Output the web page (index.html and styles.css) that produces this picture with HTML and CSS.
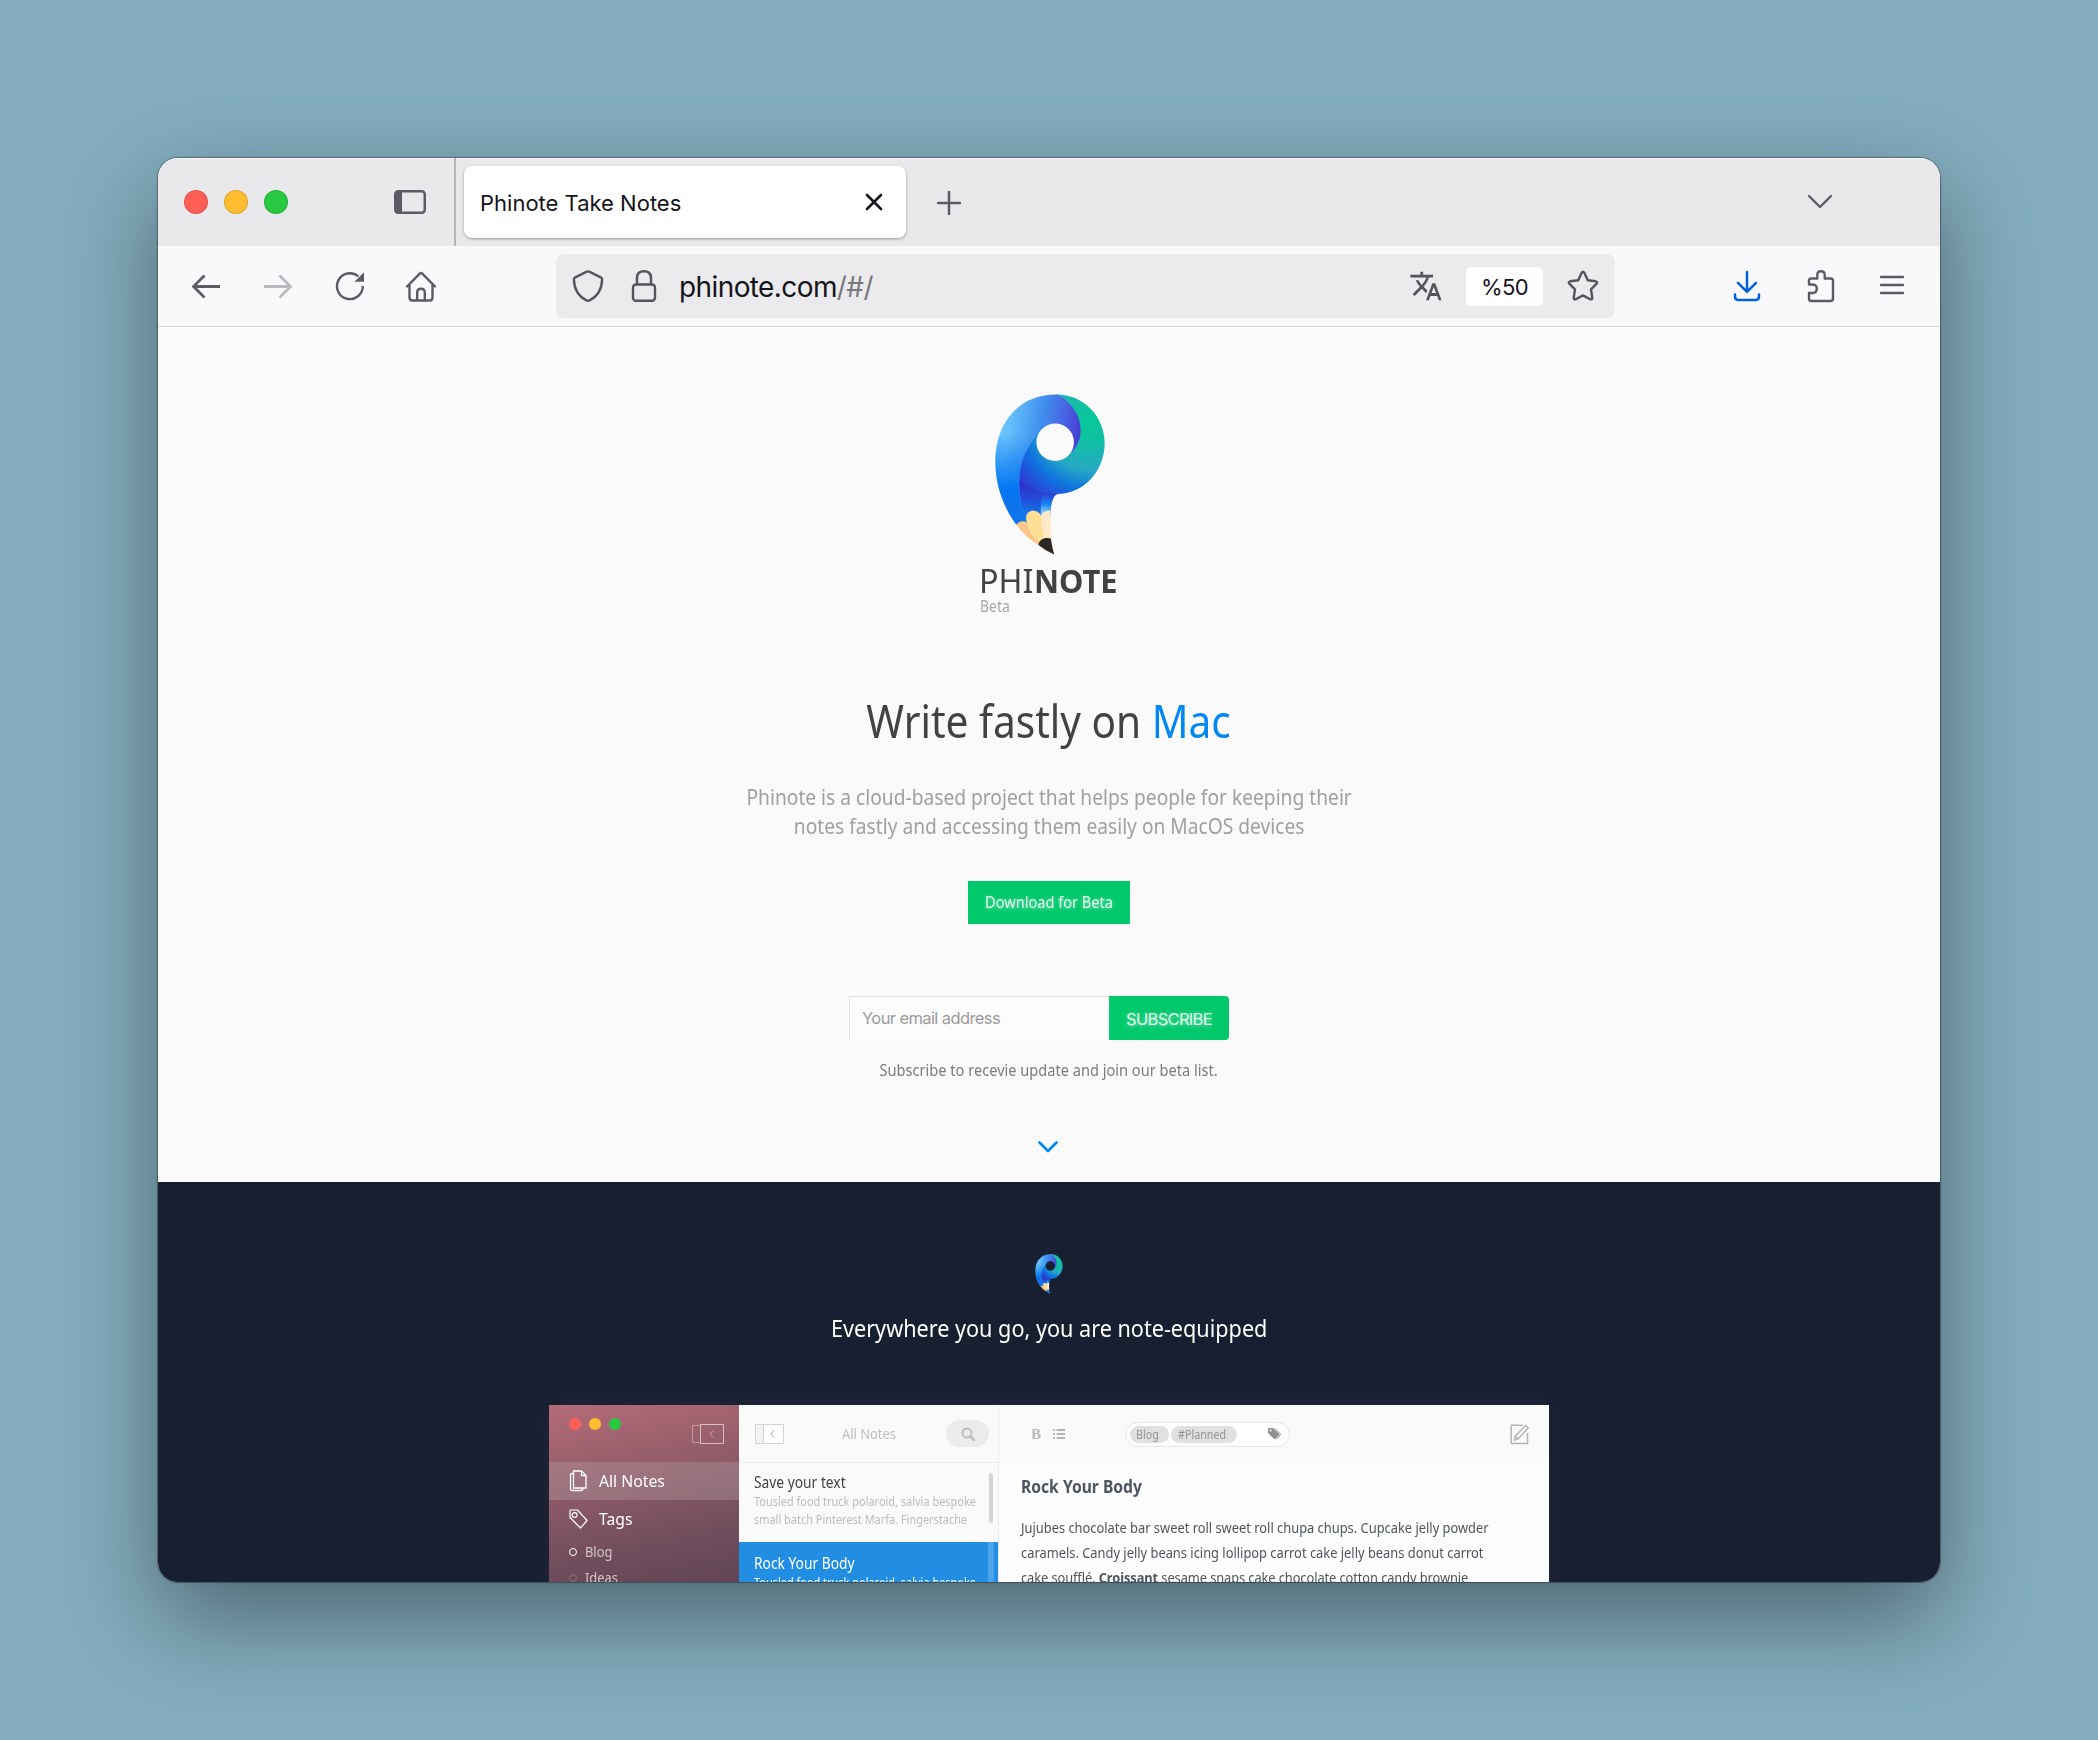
FILE: index.html
```html
<!DOCTYPE html>
<html lang="en">
<head>
<meta charset="utf-8">
<title>Phinote Take Notes</title>
<link rel="stylesheet" href="styles.css">
</head>
<body>
<svg class="sprite" aria-hidden="true">
  <defs>
    <radialGradient id="bowl" gradientUnits="userSpaceOnUse" cx="390" cy="155" r="275">
      <stop offset="0" stop-color="#06c997"/><stop offset=".2" stop-color="#10c0a2"/><stop offset=".52" stop-color="#27a9c4"/><stop offset=".72" stop-color="#0f78dc"/><stop offset=".88" stop-color="#2052dc"/><stop offset="1" stop-color="#2f3bd0"/>
    </radialGradient>
    <linearGradient id="arm" gradientUnits="userSpaceOnUse" x1="140" y1="160" x2="365" y2="190">
      <stop offset="0" stop-color="#68c3fb"/><stop offset=".45" stop-color="#3f8fee"/><stop offset=".75" stop-color="#4862e2"/><stop offset="1" stop-color="#4938d4"/>
    </linearGradient>
    <linearGradient id="armLow" gradientUnits="userSpaceOnUse" x1="170" y1="190" x2="150" y2="390">
      <stop offset="0" stop-color="#0275f2" stop-opacity="0"/><stop offset=".85" stop-color="#0275f2"/><stop offset="1" stop-color="#0d74ee"/>
    </linearGradient>
    <linearGradient id="stem" gradientUnits="userSpaceOnUse" x1="215" y1="345" x2="210" y2="440">
      <stop offset="0" stop-color="#3032cc"/><stop offset=".5" stop-color="#1f52dc"/><stop offset="1" stop-color="#1583ee"/>
    </linearGradient>
    <linearGradient id="facet" gradientUnits="userSpaceOnUse" x1="262" y1="368" x2="255" y2="422">
      <stop offset="0" stop-color="#2b3ed0"/><stop offset=".6" stop-color="#1684f2"/><stop offset="1" stop-color="#7cc4f8"/>
    </linearGradient>
    <mask id="hole" maskUnits="userSpaceOnUse" x="100" y="60" width="340" height="500">
      <path fill="#fff" d="M100 60h340v500H100z"/><circle cx="284" cy="215" r="56" fill="#000"/>
    </mask>
    <symbol id="logo" viewBox="104 71 329 481">
      <path fill="url(#stem)" d="M176 320C205 350 245 368 292 369C276 374 270 400 269 440L197 462C180 415 173 370 176 320Z"/>
      <path fill="url(#facet)" d="M246 363Q270 369 292 369C276 374 270 400 269 440L241 440Q240 400 246 363Z"/>
      <g mask="url(#hole)">
        <path fill="url(#bowl)" d="M288 72C370 72 432 138 432 218C432 302 368 370 290 370C243 370 206 351 176 325C172 290 190 180 240 150Z"/>
        <path fill="url(#arm)" d="M288 72C160 72 105 175 105 270C105 350 132 412 168 462Q180 448 197 454C168 370 172 300 193 252Q208 218 235 185L300 262Q315 262 328 250C372 215 380 125 292 72Z"/>
        <path fill="url(#armLow)" d="M288 72C160 72 105 175 105 270C105 350 132 412 168 462Q180 448 197 454C168 370 172 300 193 252Q208 218 235 185Z"/>
      </g>
      <path fill="#fcc68b" d="M168 462C176 449 193 449 201 457Q215 492 240 508L234 522Q195 500 168 462Z"/>
      <path fill="#ffe9c6" d="M240 440C244 424 256 418 270 420Q269 465 272 505L248 506Z"/>
      <path fill="#ffdf96" d="M197 445C196 424 210 419 220 420C233 421 242 430 243 442Q244 480 251 505L238 515Q205 490 197 445Z"/>
      <path fill="currentColor" d="M234 522C236 505 254 498 271 503Q274 526 281 551Q256 540 234 522Z"/>
    </symbol>
  </defs>
</svg>

<main class="window">
  <header class="tabbar">
    <div class="lights"><i class="red"></i><i class="yellow"></i><i class="green"></i></div>
    <svg class="sidebar-toggle" width="32" height="24" viewBox="0 0 32 24"><rect x="1.25" y="1.25" width="29.5" height="21.5" rx="3" fill="none" stroke="#5b5b66" stroke-width="2.5"/><path d="M2 2h6v20H2z" fill="#5b5b66"/></svg>
    <div class="tab"><span>Phinote Take Notes</span>
      <svg width="18" height="18" viewBox="0 0 18 18"><path d="M2 2l14 14M16 2L2 16" stroke="#15141a" stroke-width="2.6" stroke-linecap="round"/></svg></div>
    <svg class="plus" width="24" height="24" viewBox="0 0 24 24"><path d="M12 1v22M1 12h22" stroke="#5b5b66" stroke-width="2.5" stroke-linecap="round"/></svg>
    <svg class="tabs-menu" width="26" height="16" viewBox="0 0 26 16"><path d="M2 2l11 11L24 2" fill="none" stroke="#5b5b66" stroke-width="2.4" stroke-linecap="round" stroke-linejoin="round"/></svg>
  </header>

  <nav class="toolbar">
    <div class="nav-icons">
      <svg width="30" height="32" viewBox="0 0 30 32" fill="none" stroke="#5b5b66" stroke-width="2.8"><path d="M29 16.500H2.500M13.500 5.500l-11 11 11 11"/></svg>
      <svg width="30" height="32" viewBox="0 0 30 32" fill="none" stroke="#bababf" stroke-width="2.800"><path d="M1 16.500h26.500M16.500 5.500l11 11-11 11"/></svg>
      <svg width="30" height="32" viewBox="0 0 30 32"><path d="M27.800 16a12.900 12.900 0 1 1-4.500-9.600" fill="none" stroke="#5b5b66" stroke-width="2.400"/><path d="M29 2.200v9.600h-9.600z" fill="#5b5b66"/></svg>
      <svg width="32" height="32" viewBox="0 0 32 32" fill="none" stroke="#5b5b66" stroke-width="2.400" stroke-linecap="round" stroke-linejoin="round"><path d="M2 16.500L14.500 3.800q1.500-1.500 3 0L30 16.500M4.500 14.500v13q0 3 3 3h17q3 0 3-3v-13M12.200 30v-7.500q0-3.800 3.800-3.800t3.800 3.800V30"/></svg>
    </div>
    <div class="urlbar">
      <svg class="shield" width="32" height="32" viewBox="0 0 32 32" fill="none" stroke="#54545c" stroke-width="2.400" stroke-linejoin="round"><path d="M14.800 1.700q1.200-.7 2.400 0L28.700 7.300q1.500.8 1.400 2.400C29.800 19 25.500 26.300 17.500 30.400q-1.500.7-3 0C6.500 26.300 2.200 19 1.900 9.700Q1.800 8.100 3.300 7.300Z"/></svg>
      <svg class="lock" width="26" height="32" viewBox="0 0 26 32" fill="none" stroke="#54545c" stroke-width="2.400"><rect x="2" y="14.500" width="22" height="16.300" rx="3"/><path d="M6 14.500V8q0-6.800 7-6.800T20 8v6.500"/></svg>
      <span class="url">phinote.com<em>/#/</em></span>
      <svg class="translate" width="34" height="34" viewBox="0 0 24 24" fill="#54545c"><path d="M12.870 15.070l-2.540-2.510.03-.03c1.740-1.940 2.980-4.170 3.710-6.530H17V4h-7V2H8v2H1v1.990h11.170C11.500 7.920 10.440 9.750 9 11.350 8.070 10.320 7.300 9.190 6.690 8h-2c.73 1.630 1.730 3.170 2.980 4.560l-5.090 5.020L4 19l5-5 3.110 3.110.76-2.040zM18.500 10h-2L12 22h2l1.120-3h4.750L21 22h2l-4.500-12zm-2.620 7l1.620-4.330L19.120 17h-3.240z"/></svg>
      <span class="zoom">%50</span>
      <svg class="star" width="32" height="32" viewBox="0 0 32 32" fill="none" stroke="#54545c" stroke-width="2.400" stroke-linejoin="round"><path d="M14.700 2.800q1.300-2 2.600 0L20.800 10.200 28.800 11.300q2.200.6.9 2.400L24 19.400l1.300 8.300q0 2.300-2.200 1.500L16 25.400l-7.100 3.800q-2.200.8-2.200-1.500L8 19.400 2.300 13.700q-1.300-1.800.9-2.400l8-1.100Z"/></svg>
    </div>
    <div class="tools">
      <svg width="28" height="32" viewBox="0 0 28 32" fill="none" stroke="#0061e0" stroke-width="2.500" stroke-linecap="round" stroke-linejoin="round"><path d="M14 2v19.500M5 12.800l9 9 9-9M2 24.500v2q0 3.500 3.500 3.500h17q3.500 0 3.500-3.500v-2"/></svg>
      <svg width="28" height="34" viewBox="0 0 28 34" fill="none" stroke="#5b5b66" stroke-width="2.400" stroke-linejoin="round"><path d="M2 15.500v-3.700q0-2.300 2.300-2.300h6V6q0-3.800 3.700-3.800T17.700 6v3.500h5.800q2.500 0 2.500 2.500v17.500q0 2.500-2.500 2.500h-19Q2 32 2 29.500V24h3.500q4.300 0 4.300-4.200t-4.300-4.300Z"/></svg>
      <svg width="26" height="24" viewBox="0 0 26 24"><path d="M2 4h22M2 12h22M2 20h22" stroke="#5b5b66" stroke-width="2.400" stroke-linecap="round"/></svg>
    </div>
  </nav>

  <section class="hero">
    <svg class="logo" width="110" height="161"><use href="#logo"/></svg>
    <div class="brand">
      <div class="wordmark"><span>PHI</span><b>NOTE</b></div>
      <div class="beta">Beta</div>
    </div>
    <h1>Write fastly on <span>Mac</span></h1>
    <p class="lead">Phinote is a cloud-based project that helps people for keeping their<br>notes fastly and accessing them easily on MacOS devices</p>
    <a class="download"><span>Download for Beta</span></a>
    <form class="subscribe"><div class="email">Your email address</div><div class="submit">SUBSCRIBE</div></form>
    <p class="caption">Subscribe to recevie update and join our beta list.</p>
    <svg class="more" width="22" height="14" viewBox="0 0 22 14"><path d="M2.500 2.500l8.500 8.500 8.500-8.500" fill="none" stroke="#0388f1" stroke-width="2.800" stroke-linecap="round" stroke-linejoin="round"/></svg>
  </section>

  <section class="showcase">
    <svg class="logo-small" width="28" height="40"><use href="#logo"/></svg>
    <h2>Everywhere you go, you are note-equipped</h2>
    <div class="app">
      <aside class="side">
        <div class="side-head">
          <div class="dots"><i class="red"></i><i class="yellow"></i><i class="green"></i></div>
          <svg width="32" height="20" viewBox="0 0 32 20" fill="none" stroke="#fff"><path d="M8 1.500H.5v17H8" opacity=".35"/><path d="M8.500.5h23v19h-23z" opacity=".6"/><path d="M21 6.500l-3 3.500 3 3.500" opacity=".5"/></svg>
        </div>
        <div class="side-row active"><svg width="19" height="22" viewBox="0 0 19 22" fill="none" stroke="#fff" stroke-width="1.300"><path d="M4.500 1h8l4.500 4.500V18H4.500zM12.500 1v4.500H17M4.500 3.500H2.700Q1.500 3.500 1.500 5v14q0 1.500 1.500 1.500h9.500q1.500 0 1.500-2"/></svg><span>All Notes</span></div>
        <div class="side-row"><svg width="19" height="20" viewBox="0 0 19 20" fill="none" stroke="#fff" stroke-width="1.200" stroke-linejoin="round"><path d="M1 2q0-1 1-1h6.500L18 11.500 11.500 19 1 8.500z"/><circle cx="5.600" cy="6" r="2.400"/></svg><span>Tags</span></div>
        <div class="side-sub"><i></i><span>Blog</span></div>
        <div class="side-sub dim"><i></i><span>Ideas</span></div>
      </aside>
      <div class="list">
        <div class="list-head">
          <svg width="30" height="20" viewBox="0 0 30 20"><path d="M.5.500h8v19h-8z" fill="#f3f3f3" stroke="#d4d4d4"/><path d="M8.500.500h20v19h-20z" fill="#fff" stroke="#d4d4d4"/><path d="M19 6.500L16 10l3 3.500" fill="none" stroke="#aaa"/></svg>
          <span>All Notes</span>
          <div class="search"><svg width="14" height="14" viewBox="0 0 14 14" fill="none" stroke="#bcbcbc" stroke-width="2"><circle cx="6" cy="6" r="4.500"/><path d="M9.300 9.300l3.500 3.500" stroke-width="2.400" stroke-linecap="round"/></svg></div>
        </div>
        <div class="note">
          <h3>Save your text</h3>
          <p>Tousled food truck polaroid, salvia bespoke<br>small batch Pinterest Marfa. Fingerstache</p>
          <div class="thumb"></div>
        </div>
        <div class="note selected">
          <h3>Rock Your Body</h3>
          <p>Tousled food truck polaroid, salvia bespoke</p>
        </div>
      </div>
      <article class="editor">
        <div class="editor-head">
          <b class="bold">B</b>
          <svg width="12" height="10" viewBox="0 0 12 10" fill="#b4b4b4"><path d="M0 0h2v2H0zM0 4h2v2H0zM0 8h2v2H0zM3.500 0H12v2H3.500zM3.500 4H12v2H3.500zM3.500 8H12v2H3.500z"/></svg>
          <div class="tags"><span class="t1"><u>Blog</u></span><span class="t2"><u>#Planned</u></span>
            <svg width="13" height="12" viewBox="0 0 13 12"><path fill="#909090" d="M0 1.200Q0 0 1.200 0H5l6 5.800q.6.600 0 1.200L7.300 11q-.6.600-1.200 0L0 5z"/><circle cx="2.600" cy="2.600" r="1" fill="#fff"/><path d="M7 .4l5.200 5.400q.5.600 0 1.200L8.500 11.200" fill="none" stroke="#909090"/></svg></div>
          <svg class="compose" width="20" height="21" viewBox="0 0 20 21" fill="none" stroke="#b6b6b6" stroke-width="1.500"><path d="M13 1.200H1.200v18.300H17.500V9"/><path d="M15.500 1.500l2.700 2.700L8 15l-3.500 1 .7-3.800z"/><path d="M5.300 12.300l2.500 2.500"/></svg>
        </div>
        <h3>Rock Your Body</h3>
        <p>Jujubes chocolate bar sweet roll sweet roll chupa chups. Cupcake jelly powder<br>caramels. Candy jelly beans icing lollipop carrot cake jelly beans donut carrot<br><span class="tight">cake soufflé. <b>Croissant</b> sesame snaps cake chocolate cotton candy brownie</span></p>
      </article>
    </div>
  </section>
</main>
</body>
</html>
```
FILE: styles.css
```css
* { box-sizing: border-box; margin: 0; padding: 0; }
body { width: 2098px; height: 1740px; overflow: hidden; padding: 158px; background: #84adbe; font-family: "Noto Sans", sans-serif; }
svg { display: block; flex: none; }
i { display: block; border-radius: 50%; }
.sprite { position: absolute; width: 0; height: 0; }
.red { background: #ff5f57; }
.yellow { background: #febc2e; }
.green { background: #28c840; }

.window { width: 1782px; height: 1424px; border-radius: 20px; overflow: hidden; display: flex; flex-direction: column; background: #fafafa; box-shadow: 0 0 0 1px rgba(0,0,0,.25), 0 0 3px rgba(0,0,0,.2), 0 36px 96px rgba(0,0,0,.41); }

.tabbar { height: 88px; flex: none; display: flex; align-items: center; background: #e9e9eb; box-shadow: inset 0 1px 0 #f9f9fa; font-family: Inter, sans-serif; }
.lights { display: flex; gap: 16px; margin-left: 26px; }
.lights i { width: 24px; height: 24px; border: 1px solid rgba(0,0,0,.12); }
.sidebar-toggle { margin-left: 106px; }
.tab { width: 442px; height: 72px; margin-left: 38px; padding: 0 23px 0 16px; display: flex; align-items: center; justify-content: space-between; background: #fff; border-radius: 8px; box-shadow: 0 1px 3px rgba(0,0,0,.35); color: #15141a; font-size: 22px; line-height: 30px; position: relative; }
.tab::before { content: ""; position: absolute; left: -10px; top: -8px; width: 2px; height: 88px; background: #b5b5b8; }
.tab span { padding-top: 2px; }
.plus { margin-left: 31px; margin-top: 2px; }
.tabs-menu { margin-left: auto; margin-right: 107px; }

.toolbar { height: 81px; flex: none; display: flex; background: #f9f9fb; border-bottom: 1px solid #d8d8da; }
.nav-icons { display: flex; gap: 42px; width: 398px; padding: 24px 0 0 33px; }
.nav-icons svg:last-child { margin-left: -2px; }
.urlbar { width: 1059px; height: 64px; margin-top: 8px; border-radius: 8px; background: #ebebed; display: flex; align-items: center; font-family: Inter, sans-serif; }
.shield { margin-left: 16px; }
.lock { margin-left: 27px; }
.url { margin-left: 22px; margin-top: 2px; font-size: 28px; line-height: 36px; color: #15141a; letter-spacing: -.6px; }
.url em { font-style: normal; color: #77777c; }
.translate { margin-left: auto; }
.zoom { width: 77px; height: 39px; margin-left: 23px; border-radius: 5px; background: #fff; text-align: center; font-size: 22px; line-height: 41px; letter-spacing: -.6px; color: #15141a; }
.star { margin: 0 16px 0 24px; }
.tools { display: flex; padding-top: 24px; margin-left: 118px; }
.tools svg:nth-child(2) { margin-left: 46px; margin-top: -1px; }
.tools svg:nth-child(3) { margin-left: 44px; margin-top: 3px; }

.hero { height: 855px; flex: none; padding-top: 67px; display: flex; flex-direction: column; align-items: center; background: #fafafa; }
.logo { color: #2b2622; margin-left: 1px; }
.brand { width: 140px; margin-top: 6px; }
.wordmark { display: flex; font-size: 33px; line-height: 40px; color: #424242; white-space: nowrap; }
.wordmark span { width: 55px; transform: scaleX(.98); transform-origin: 0 0; }
.wordmark b { transform: scaleX(.935); transform-origin: 0 0; }
.beta { margin: -5px 0 0 1px; font-size: 15.5px; line-height: 20px; color: #a9a9a9; transform: scaleX(.9); transform-origin: 0 0; }
h1 { margin-top: 74px; font-size: 46px; line-height: 60px; font-weight: 400; color: #424242; white-space: nowrap; transform: scaleX(.882); }
h1 span { color: #0388f1; }
.lead { margin-top: 33px; font-size: 21px; line-height: 29px; color: #a0a0a0; text-align: center; white-space: nowrap; transform: scaleX(.914); }
.download { margin-top: 40px; width: 162px; height: 43px; background: #00c96b; color: rgba(255,255,255,.88); text-shadow: 0 1px 4px rgba(255,255,255,.5); font-size: 15.5px; line-height: 43px; display: flex; justify-content: center; white-space: nowrap; }
.download span { transform: scaleX(.94); }
.subscribe { margin: 72px 20px 0 0; display: flex; height: 44px; font-family: Inter, sans-serif; }
.email { width: 260px; padding-left: 12px; border: solid #e2e2e2; border-width: 1px 0 0 1px; background: #fcfcfc; color: #9b9b9b; font-size: 16.500px; line-height: 43px; letter-spacing: -.6px; }
.submit { width: 120px; background: #00c96b; border-radius: 0 4px 4px 0; text-align: center; font-size: 16.500px; line-height: 46px; letter-spacing: -.7px; color: rgba(255,255,255,.88); text-shadow: 0 1px 4px rgba(255,255,255,.5); }
.caption { margin-top: 20px; font-size: 15.500px; line-height: 21px; color: #7c7c7c; white-space: nowrap; transform: scaleX(.941); }
.more { margin-top: 59px; margin-right: 3px; }

.showcase { flex: 1; min-height: 0; padding-top: 72px; display: flex; flex-direction: column; align-items: center; background: #162031; }
.logo-small { color: #2f7fd8; }
h2 { margin-top: 19px; font-size: 24px; line-height: 30px; font-weight: 400; color: #fff; white-space: nowrap; transform: scaleX(.901); }
.app { width: 1000px; height: 400px; flex: none; margin-top: 62px; display: flex; box-shadow: 0 0 24px rgba(70,50,80,.32); }

.side { width: 190px; color: #fff; background: linear-gradient(168deg, #b46c78 0, #975e6b 70px, #704d5c 160px, #5c4252 230px); }
.side-head { height: 57px; display: flex; justify-content: space-between; padding: 13px 15px 0 20px; }
.side-head svg { margin-top: 6px; }
.dots { display: flex; gap: 8px; }
.dots i { width: 12px; height: 12px; }
.side-row { height: 38px; padding-left: 20px; display: flex; align-items: center; gap: 11px; font-size: 17px; line-height: 38px; white-space: nowrap; }
.side-row.active { background: rgba(180,160,165,.36); }
.side-row span { transform: scaleX(.925); transform-origin: 0 0; }
.side-sub { height: 26px; display: flex; align-items: center; font-size: 14px; color: #d3c4ca; }
.side-sub i { width: 8px; height: 8px; margin: 2px 8px 0 20px; border: 1.500px solid #fff; }
.side-sub.dim i { opacity: .2; }
.side-sub span { line-height: 26px; padding-top: 2px; transform: scaleX(.92); transform-origin: 0 0; }

.list { width: 260px; background: #fafafa; border-right: 1px solid #ececec; }
.list-head { height: 58px; border-bottom: 1px solid #ebebeb; display: flex; align-items: center; padding-left: 16px; color: #bdbdbd; font-size: 14px; }
.list-head span { width: 104px; margin-left: 57px; line-height: 20px; transform: scaleX(.92); transform-origin: 0 0; }
.search { width: 43px; height: 27px; border-radius: 14px; background: #ebebeb; display: flex; align-items: center; justify-content: center; }
.note { height: 79px; padding: 9px 0 0 15px; position: relative; }
.note h3 { font-size: 15.500px; line-height: 21px; font-weight: 400; color: #444; white-space: nowrap; transform: scaleX(.89); transform-origin: 0 0; }
.note p { font-size: 12px; line-height: 18px; color: #bcbcbc; white-space: nowrap; transform: scaleX(.912); transform-origin: 0 0; }
.thumb { position: absolute; right: 5px; top: 10px; width: 4px; height: 50px; border-radius: 2px; background: #d5d5d5; }
.note.selected { height: 200px; padding-top: 11px; background: linear-gradient(90deg, #218ee4 249px, #4ba3e9 249px, #4ba3e9 255px, #218ee4 255px); }
.note.selected h3, .note.selected p { color: #fff; }

.editor { flex: 1; background: #fdfdfd; color: #4e555e; }
.editor-head { height: 58px; display: flex; align-items: center; background: #fafafa; padding-left: 32px; }
.bold { width: 22px; font: 700 15px/20px "Liberation Serif", serif; color: #bbb; }
.tags { width: 165px; height: 25px; margin-left: 60px; padding: 0 8px 0 4px; border: 1px solid #e6e6e6; border-radius: 13px; background: #fff; display: flex; align-items: center; }
.tags span { height: 17px; border-radius: 9px; background: #e0e0e0; color: #949494; font-size: 12px; line-height: 18px; display: flex; margin-right: 2px; }
.tags u { text-decoration: none; transform: scaleX(.892); transform-origin: 0 0; }
.t1 { width: 39px; padding-left: 6px; }
.t2 { width: 66px; padding-left: 7px; }
.tags svg { margin-left: auto; }
.compose { margin-left: auto; margin-right: 19px; }
.editor h3 { margin: 11px 0 0 22px; font-size: 17.500px; line-height: 24px; white-space: nowrap; transform: scaleX(.894); transform-origin: 0 0; }
.editor p { margin: 17px 0 0 22px; font-size: 14px; line-height: 25px; white-space: nowrap; transform: scaleX(.919); transform-origin: 0 0; }
.tight { letter-spacing: -.1px; }
```
